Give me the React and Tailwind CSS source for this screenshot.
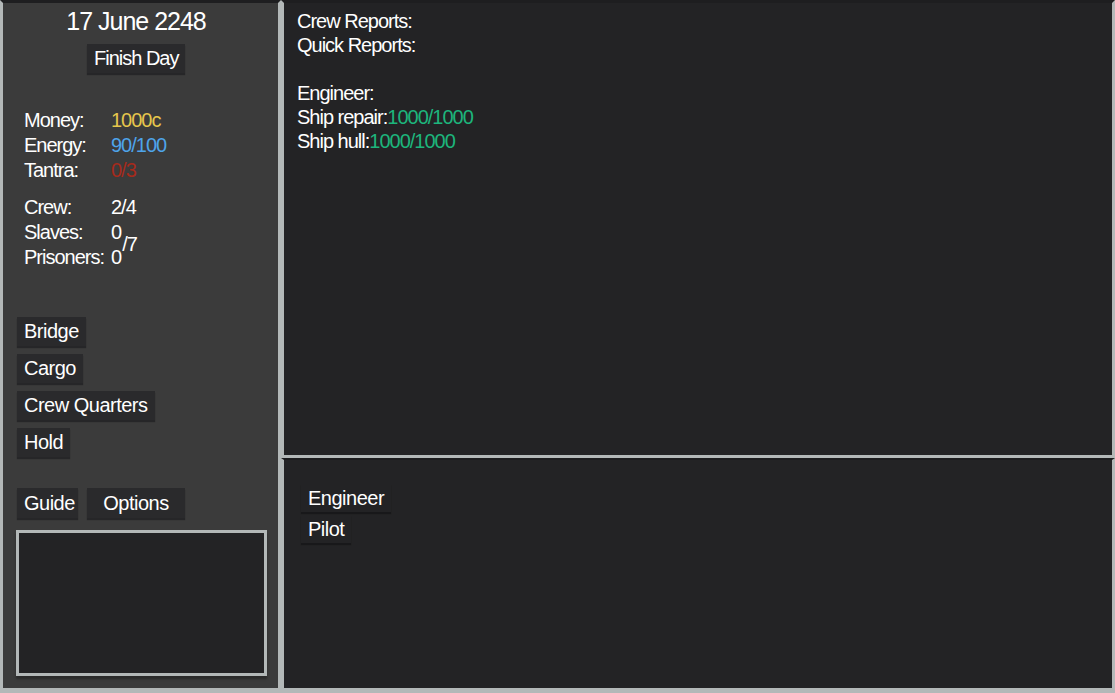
import React from "react";

const stats = [
  { label: "Money:", value: "1000c", color: "text-[#e6c64c]" },
  { label: "Energy:", value: "90/100", color: "text-[#4ea4ea]" },
  { label: "Tantra:", value: "0/3", color: "text-[#a62a1b]" },
];

const rooms = ["Bridge", "Cargo", "Crew Quarters", "Hold"];

function Btn({ children, className = "" }) {
  return (
    <button
      className={
        "h-[29px] whitespace-nowrap bg-[#2a2a2c] px-[7px] text-[20px] leading-[29px] tracking-[-0.5px] text-white shadow-[0_2px_1px_#262628] " +
        className
      }
    >
      {children}
    </button>
  );
}

export default function App() {
  return (
    <div className="flex h-[693px] w-[1115px] overflow-hidden bg-[#1c1c1e] font-['Liberation_Sans',Arial,sans-serif] tracking-[-1px] text-white">
      {/* Left sidebar */}
      <aside className="flex w-[281px] flex-col border-x-[3px] border-t-[3px] border-b-[5px] border-x-[#b3b8b8] border-t-[#1e1e20] border-b-[#b3b8b8] bg-[#3b3b3b]">
        <div className="pr-[9px] pt-[3px] text-center text-[25px] leading-[30px]">
          17 June 2248
        </div>

        <div className="mt-[8px] flex justify-center pr-[9px]">
          <Btn className="w-[98px] px-0 tracking-[-1px]">Finish Day</Btn>
        </div>

        {/* Stats */}
        <div className="mt-[35px] pl-[21px] text-[20px] leading-[25px]">
          {stats.map((s) => (
            <div key={s.label} className="flex">
              <span className="w-[87px]">{s.label}</span>
              <span className={s.color}>{s.value}</span>
            </div>
          ))}

          <div className="mt-[12px] flex">
            <span className="w-[87px]">Crew:</span>
            <span>2/4</span>
          </div>
          <div className="flex">
            <div className="flex flex-col">
              <div className="flex">
                <span className="w-[87px]">Slaves:</span>
                <span>0</span>
              </div>
              <div className="flex">
                <span className="w-[87px]">Prisoners:</span>
                <span>0</span>
              </div>
            </div>
            <span className="ml-[1px] self-center pb-[2px]">/7</span>
          </div>
        </div>

        {/* Rooms */}
        <div className="mt-[47px] flex flex-col items-start gap-[8px] pl-[14px]">
          {rooms.map((r) => (
            <Btn key={r}>{r}</Btn>
          ))}
        </div>

        <div className="mt-[31px] flex gap-[9px] pl-[14px]">
          <Btn className="h-[30px] w-[61px]">Guide</Btn>
          <Btn className="h-[30px] w-[98px] px-0">Options</Btn>
        </div>

        {/* Minimap */}
        <div className="ml-[13px] mt-[12px] h-[146px] w-[251px] border-[3px] border-[#b3b8b8] bg-[#232325] shadow-[0_3px_2px_#2a2a2a]" />
      </aside>

      {/* Right side */}
      <main className="flex flex-1 flex-col">
        <section className="h-[458px] border-x-[3px] border-t-[3px] border-b-[3px] border-x-[#b3b8b8] border-t-[#1e1e20] border-b-[#b3b8b8] bg-[#232325] pl-[13px] pt-[6px] text-[20px] leading-[24px]">
          <div>Crew Reports:</div>
          <div>Quick Reports:</div>
          <div className="h-[24px]" />
          <div>Engineer:</div>
          <div>
            Ship repair:<span className="text-[#1db57c]">1000/1000</span>
          </div>
          <div>
            Ship hull:<span className="text-[#1db57c]">1000/1000</span>
          </div>
        </section>

        <section className="flex flex-1 flex-col items-start gap-[3px] border-x-[3px] border-b-[5px] border-t-[2px] border-x-[#b3b8b8] border-b-[#b3b8b8] border-t-[#1c1c1e] bg-[#232325] pl-[17px] pt-[24px]">
          <button className="h-[28px] px-[7px] text-[20px] leading-[26px] tracking-[-0.5px] text-white shadow-[0_2px_1px_#18181a]">
            Engineer
          </button>
          <button className="h-[28px] w-[50px] px-[7px] text-left text-[20px] leading-[26px] tracking-[-0.5px] text-white shadow-[0_2px_1px_#18181a]">
            Pilot
          </button>
        </section>
      </main>
    </div>
  );
}
